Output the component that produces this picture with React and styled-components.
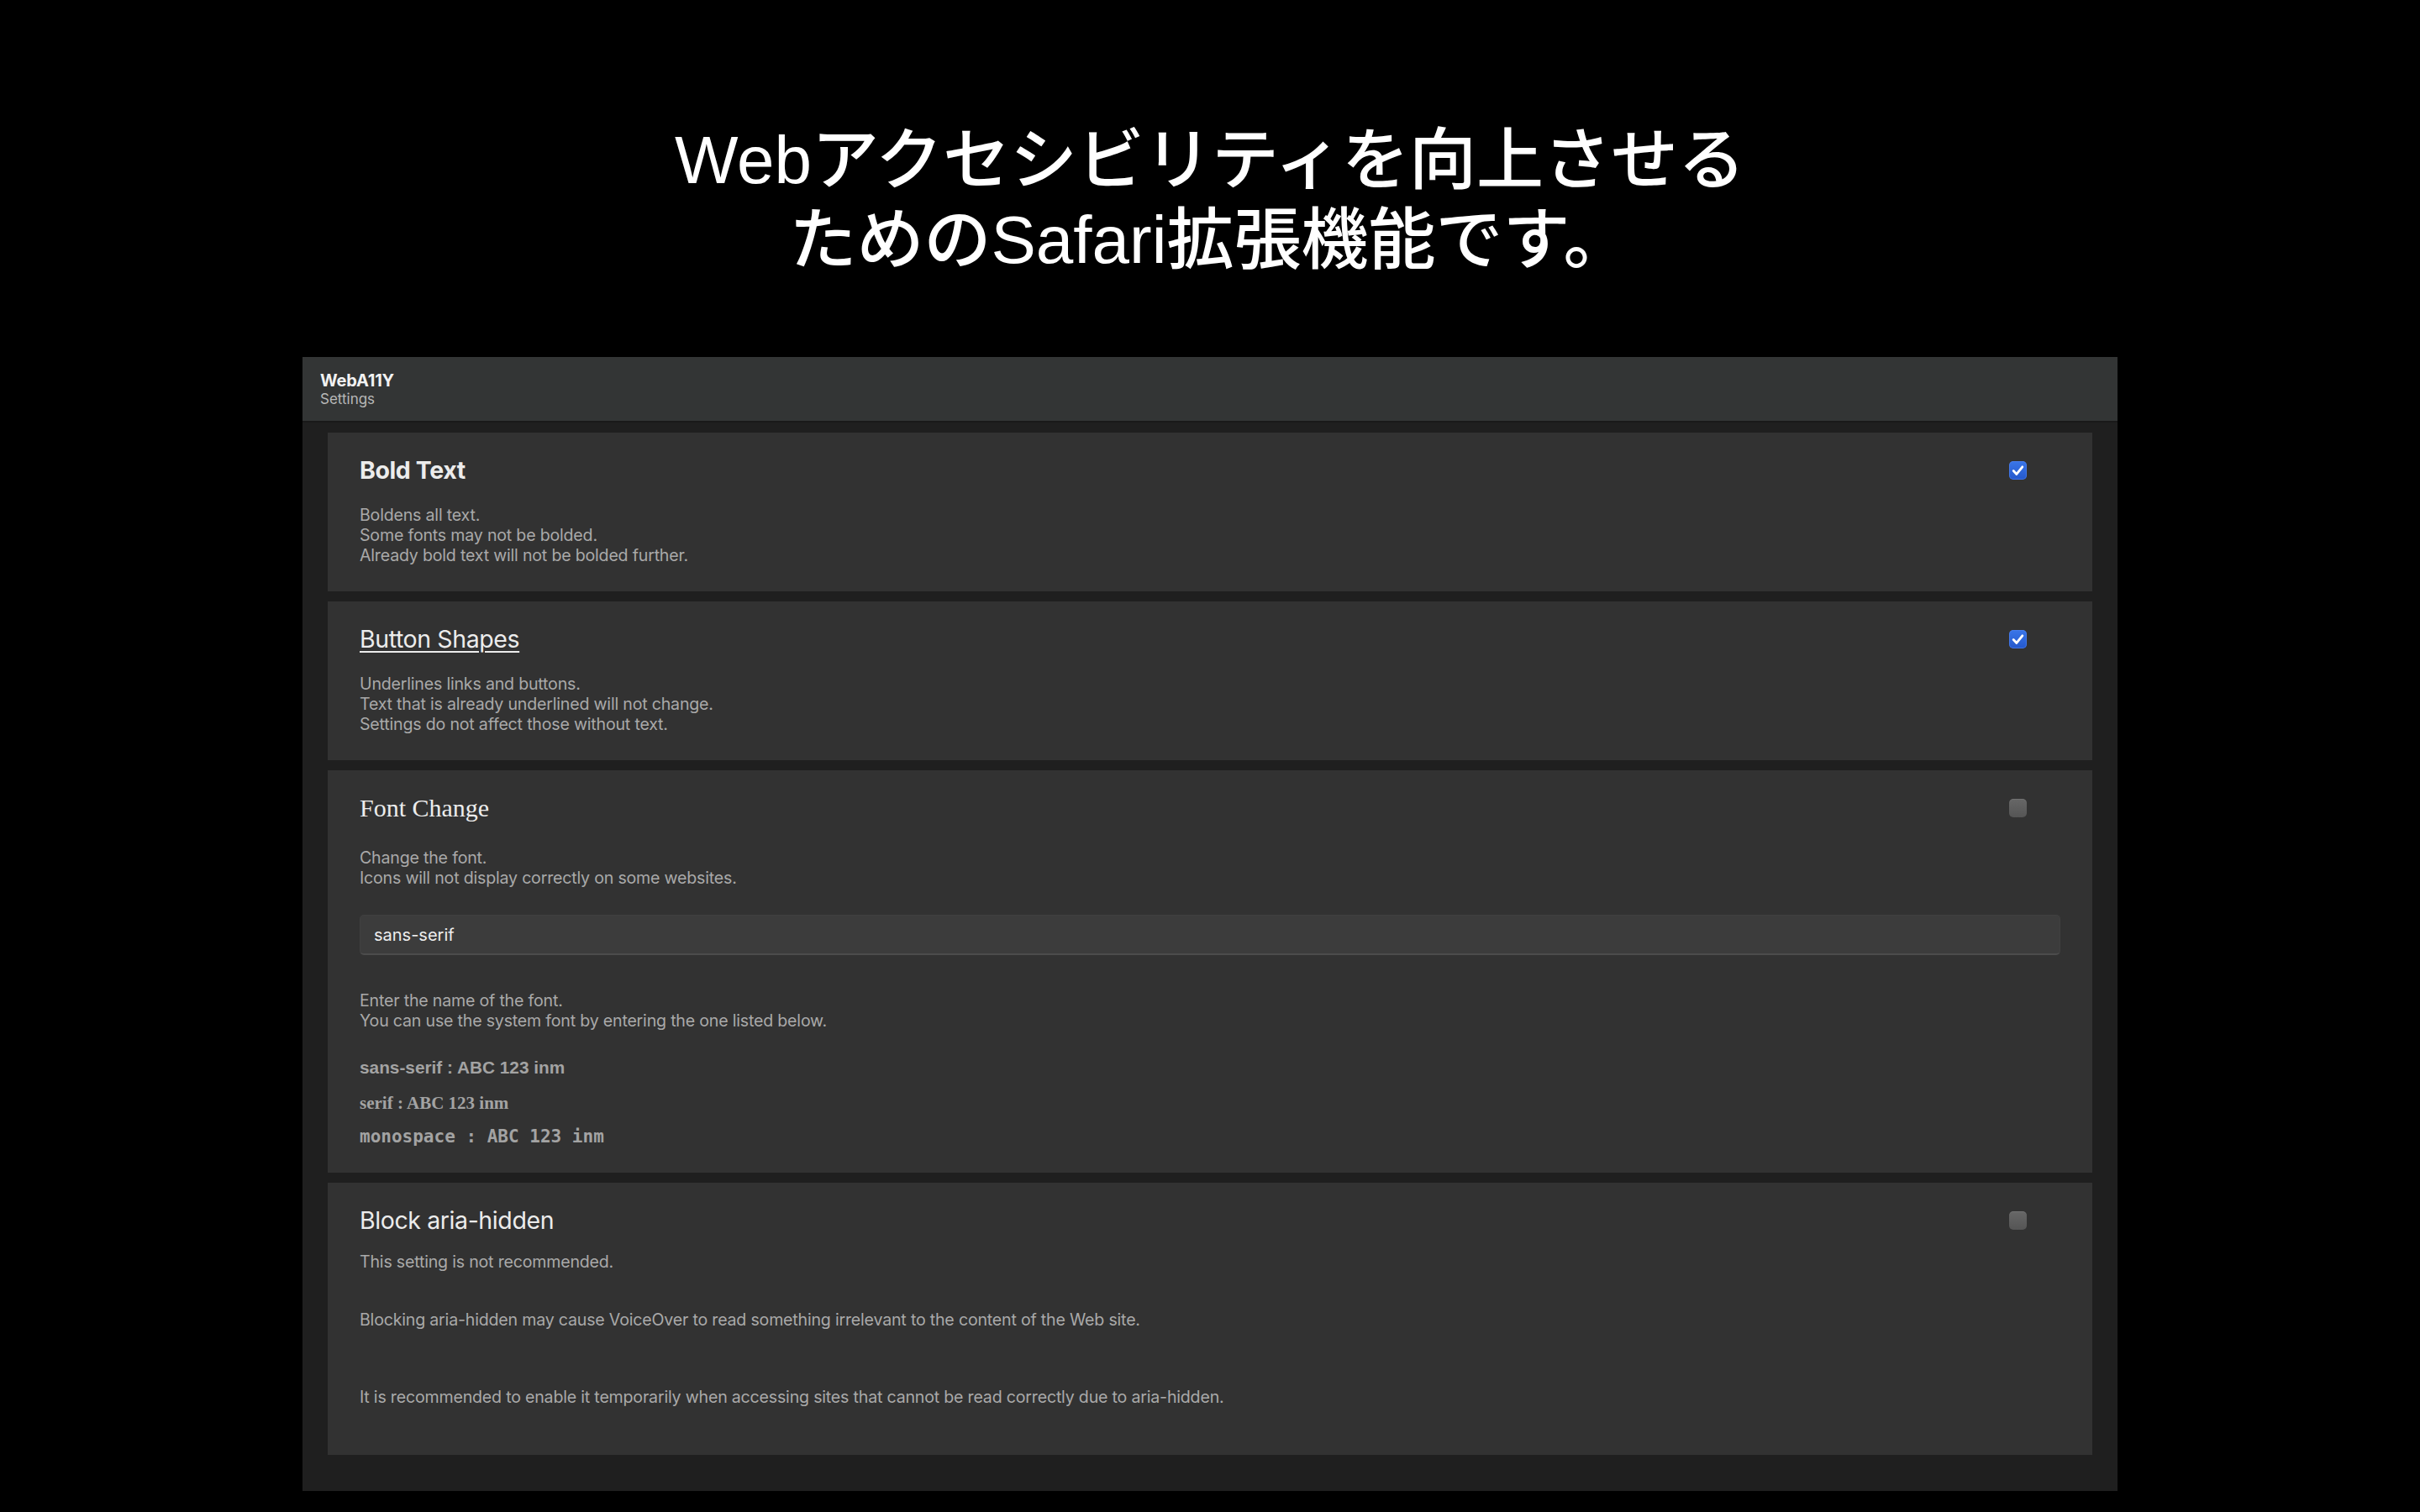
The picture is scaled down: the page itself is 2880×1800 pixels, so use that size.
import styled, { createGlobalStyle } from "styled-components";

const GlobalStyle = createGlobalStyle`
  html, body {
    margin: 0;
    padding: 0;
    background: #000;
  }
  * {
    box-sizing: border-box;
  }
`;

const ui = `Inter, "Noto Sans", sans-serif`;

export default function App() {
  return (
    <>
      <GlobalStyle />
      <Page>
        <Hero>
          Webアクセシビリティを向上させる
          <br />
          ためのSafari拡張機能です。
        </Hero>
        <Panel>
          <Header>
            <AppName>WebA11Y</AppName>
            <SubTitle>Settings</SubTitle>
          </Header>
          <Body>
            <Card>
              <TitleRow>
                <Title $bold>Bold Text</Title>
                <Checkbox checked />
              </TitleRow>
              <Desc $mt={23}>
                Boldens all text.
                <br />
                Some fonts may not be bolded.
                <br />
                Already bold text will not be bolded further.
              </Desc>
            </Card>

            <Card>
              <TitleRow>
                <Title $underline>Button Shapes</Title>
                <Checkbox checked />
              </TitleRow>
              <Desc $mt={23}>
                Underlines links and buttons.
                <br />
                Text that is already underlined will not change.
                <br />
                Settings do not affect those without text.
              </Desc>
            </Card>

            <Card>
              <TitleRow>
                <Title $serif>Font Change</Title>
                <Checkbox />
              </TitleRow>
              <Desc $mt={29}>
                Change the font.
                <br />
                Icons will not display correctly on some websites.
              </Desc>
              <FontInput type="text" defaultValue="sans-serif" readOnly />
              <Desc $mt={42}>
                Enter the name of the font.
                <br />
                You can use the system font by entering the one listed below.
              </Desc>
              <Sample $font={`"Liberation Sans", Arial, sans-serif`} $size={20.8} $mt={32}>
                sans-serif : ABC 123 inm
              </Sample>
              <Sample $font={`"Liberation Serif", "Times New Roman", serif`} $size={21} $mt={18}>
                serif : ABC 123 inm
              </Sample>
              <Sample $font={`"DejaVu Sans Mono", monospace`} $size={21} $mt={16}>
                monospace : ABC 123 inm
              </Sample>
            </Card>

            <Card>
              <TitleRow>
                <Title>Block aria-hidden</Title>
                <Checkbox />
              </TitleRow>
              <Desc $mt={19}>This setting is not recommended.</Desc>
              <Desc $mt={45}>
                Blocking aria-hidden may cause VoiceOver to read something irrelevant to the content of the Web site.
              </Desc>
              <Desc $mt={68} $mb={26}>
                It is recommended to enable it temporarily when accessing sites that cannot be read correctly due to aria-hidden.
              </Desc>
            </Card>
          </Body>
        </Panel>
      </Page>
    </>
  );
}

const Checkbox = ({ checked }) => (
  <Box $checked={checked}>
    {checked && (
      <svg width="21" height="22" viewBox="0 0 21 22">
        <path
          d="M5.2 11.6 L8.9 15.4 L15.8 6.8"
          fill="none"
          stroke="#fff"
          strokeWidth="2.8"
          strokeLinecap="round"
          strokeLinejoin="round"
        />
      </svg>
    )}
  </Box>
);

const Page = styled.div`
  min-height: 1800px;
  display: flex;
  flex-direction: column;
  align-items: center;
  padding-top: 143px;
`;

const Hero = styled.h1`
  margin: 0;
  color: #fff;
  font-family: "Liberation Sans", "Noto Sans CJK JP", sans-serif;
  font-size: 80px;
  font-weight: 500;
  line-height: 95px;
  text-align: center;
`;

const Panel = styled.div`
  width: 2160px;
  margin-top: 92px;
  background: #1f1f1f;
  font-family: ${ui};
`;

const Header = styled.div`
  height: 78px;
  padding: 17px 21px 0;
  background: #333535;
  border-bottom: 2px solid #191919;
`;

const AppName = styled.div`
  color: #f2f2f2;
  font-size: 20px;
  font-weight: 700;
  line-height: 23px;
  letter-spacing: -0.2px;
`;

const SubTitle = styled.div`
  color: #b8b8b8;
  font-size: 17px;
  line-height: 21px;
`;

const Body = styled.div`
  display: flex;
  flex-direction: column;
  gap: 12px;
  padding: 12px 30px 43px;
`;

const Card = styled.section`
  background: #323232;
  padding: 27px 38px 31px;
`;

const TitleRow = styled.div`
  display: flex;
  align-items: center;
  justify-content: space-between;
  padding-right: 40px;
`;

const Title = styled.h2`
  margin: 0;
  color: #ececec;
  font-family: ${(p) => (p.$serif ? `"Liberation Serif", "Times New Roman", serif` : ui)};
  font-size: ${(p) => (p.$serif ? 30 : 28.5)}px;
  font-weight: ${(p) => (p.$bold ? 700 : 400)};
  line-height: 36px;
  letter-spacing: ${(p) => (p.$serif ? "0" : "-0.4px")};
  text-decoration: ${(p) => (p.$underline ? "underline" : "none")};
  text-decoration-thickness: 2px;
  text-underline-offset: 4px;
`;

const Box = styled.span`
  display: flex;
  align-items: center;
  justify-content: center;
  width: 21px;
  height: 22px;
  border-radius: 5px;
  background: ${(p) =>
    p.$checked
      ? "linear-gradient(#3a76e8, #2458cc)"
      : "linear-gradient(#676767, #555555)"};
  box-shadow: ${(p) =>
    p.$checked
      ? "inset 0 0 0 1px rgba(80, 130, 240, 0.6)"
      : "inset 0 1px 0 rgba(255, 255, 255, 0.08)"};
`;

const Desc = styled.p`
  margin: ${(p) => p.$mt || 0}px 0 ${(p) => p.$mb || 0}px;
  color: #a9a9a9;
  font-size: 19.6px;
  line-height: 24px;
  letter-spacing: -0.2px;
`;

const FontInput = styled.input`
  display: block;
  width: 100%;
  height: 48px;
  margin-top: 32px;
  padding: 0 16px;
  background: #3c3c3c;
  border: 1px solid #404040;
  border-bottom: 2px solid #4c4c4c;
  border-radius: 5px;
  color: #eeeeee;
  font-family: ${ui};
  font-size: 20px;
  outline: none;
`;

const Sample = styled.div`
  margin-top: ${(p) => p.$mt}px;
  color: #a3a3a3;
  font-family: ${(p) => p.$font};
  font-size: ${(p) => p.$size}px;
  font-weight: 700;
  line-height: 24px;
`;
